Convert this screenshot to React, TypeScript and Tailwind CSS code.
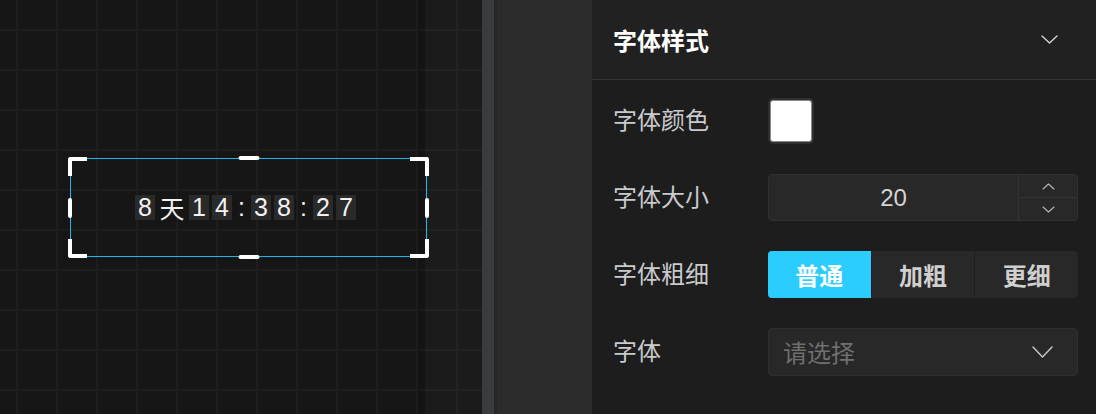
import { useState } from 'react';

const CJK = "font-['Noto_Sans_CJK_SC','Noto_Sans',sans-serif]";
const NUM = "font-['Liberation_Sans','Noto_Sans_CJK_SC',sans-serif]";

const countdown = ['8', '天', '1', '4', ':', '3', '8', ':', '2', '7'];

function Chevron({ up = false, w = 17, h = 9, color = '#d9d9d9', stroke = 1.3 }: { up?: boolean; w?: number; h?: number; color?: string; stroke?: number }) {
  const pts = up ? `1,${h - 1} ${w / 2},1 ${w - 1},${h - 1}` : `1,1 ${w / 2},${h - 1} ${w - 1},1`;
  return (
    <svg width={w} height={h} viewBox={`0 0 ${w} ${h}`} fill="none">
      <polyline points={pts} stroke={color} strokeWidth={stroke} strokeLinecap="round" strokeLinejoin="round" />
    </svg>
  );
}

function CountdownWidget() {
  return (
    <div className="absolute left-[70px] top-[158px] w-[357px] h-[99px] border border-[#1eb6ec] flex items-center justify-center">
      {/* corner handles */}
      <div className="absolute -left-[3px] -top-[2px] w-[19px] h-[19px] border-l-[4px] border-t-[4px] border-white rounded-tl-[3px]" />
      <div className="absolute -right-[3px] -top-[2px] w-[19px] h-[19px] border-r-[4px] border-t-[4px] border-white rounded-tr-[3px]" />
      <div className="absolute -left-[3px] -bottom-[2px] w-[19px] h-[19px] border-l-[4px] border-b-[4px] border-white rounded-bl-[3px]" />
      <div className="absolute -right-[3px] -bottom-[2px] w-[19px] h-[19px] border-r-[4px] border-b-[4px] border-white rounded-br-[3px]" />
      {/* edge handles */}
      <div className="absolute left-1/2 -translate-x-1/2 -top-[3px] w-[21px] h-[4px] rounded-full bg-white" />
      <div className="absolute left-1/2 -translate-x-1/2 -bottom-[3px] w-[21px] h-[4px] rounded-full bg-white" />
      <div className="absolute top-1/2 -translate-y-1/2 -left-[3px] w-[4px] h-[20px] rounded-full bg-white" />
      <div className="absolute top-1/2 -translate-y-1/2 -right-[3px] w-[4px] h-[20px] rounded-full bg-white" />

      <div className={`flex items-center gap-[3px] -ml-[6px] text-[25px] text-[#f2f2f2] ${NUM}`}>
        {countdown.map((c, i) =>
          c === ':' ? (
            <span key={i} className="w-[13px] h-[25px] flex items-center justify-center leading-none">:</span>
          ) : c === '天' ? (
            <span key={i} className={`w-[28px] h-[25px] flex items-center justify-center leading-none ${CJK}`}>天</span>
          ) : (
            <span key={i} className="w-[20px] h-[25px] bg-[#2a2a2a] flex items-center justify-center leading-none">{c}</span>
          ),
        )}
      </div>
    </div>
  );
}

function Canvas() {
  return (
    <div className="relative w-[482px] h-full bg-[#161616] bg-[linear-gradient(90deg,#1d1d1d_2px,transparent_2px),linear-gradient(#1d1d1d_2px,transparent_2px)] bg-[length:40px_40px] bg-[position:16px_29px] flex">
      <div className="flex-1" />
      <div className="w-[8px] bg-black/[0.08]" />
      <div className="w-[57px] bg-white/[0.025]" />
      <CountdownWidget />
    </div>
  );
}

function Row({ label, children }: { label: string; children: React.ReactNode }) {
  return (
    <div className="flex items-center h-[47px]">
      <div className="w-[155px] text-[24px] leading-none text-[#c9cacd] -mt-[3px]">{label}</div>
      {children}
    </div>
  );
}

function StylePanel() {
  const [weight, setWeight] = useState('普通');
  return (
    <div className={`flex-1 h-full bg-[#1d1d1d] flex flex-col ${CJK}`}>
      <div className="h-[80px] bg-[#212121] border-b border-[#353535] flex items-center justify-between pl-[21px] pr-[38px]">
        <span className="text-[24px] font-bold text-white leading-none">字体样式</span>
        <Chevron />
      </div>
      <div className="flex flex-col gap-[30px] pt-[17px] pl-[21px] pr-[18px]">
        <Row label="字体颜色">
          <div className="w-[46px] h-[46px] rounded-[5px] bg-[#2f2f2f] p-[2px]">
            <div className="w-full h-full rounded-[3px] border border-[#8a8a8a] bg-white" />
          </div>
        </Row>
        <Row label="字体大小">
          <div className="w-[310px] h-[47px] rounded-[4px] bg-[#282828] border border-[#303030] flex">
            <div className={`flex-1 flex items-center justify-center text-[24px] text-[#d4d4d4] ${NUM}`}>20</div>
            <div className="w-[59px] border-l border-[#333] flex flex-col">
              <div className="flex-1 flex items-center justify-center border-b border-[#333]">
                <Chevron up w={13} h={7} color="#b8b8b8" stroke={1.1} />
              </div>
              <div className="flex-1 flex items-center justify-center">
                <Chevron w={13} h={7} color="#b8b8b8" stroke={1.1} />
              </div>
            </div>
          </div>
        </Row>
        <Row label="字体粗细">
          <div className="w-[310px] h-[47px] rounded-[4px] bg-[#282828] flex overflow-hidden">
            {['普通', '加粗', '更细'].map((w, i) => (
              <button
                key={w}
                onClick={() => setWeight(w)}
                className={`flex-1 flex items-center justify-center text-[24px] font-bold leading-none ${
                  i > 0 ? 'border-l border-[#1f1f1f]' : ''
                } ${weight === w ? 'bg-[#2bcdfe] text-white' : 'text-[#cfcfcf]'}`}
              >
                {w}
              </button>
            ))}
          </div>
        </Row>
        <Row label="字体">
          <div className="w-[310px] h-[48px] rounded-[4px] bg-[#282828] border border-[#2f2f2f] flex items-center justify-between pl-[14px] pr-[24px]">
            <span className="text-[24px] leading-none text-[#6f6f6f]">请选择</span>
            <Chevron w={21} h={12} color="#c4c4c4" stroke={1.5} />
          </div>
        </Row>
      </div>
    </div>
  );
}

export default function App() {
  return (
    <div className="w-[1096px] h-[414px] flex overflow-hidden bg-[#2c2c2c]">
      <Canvas />
      <div className="w-[12px] h-full bg-[#3a3b3d]" />
      <div className="w-[3px] h-full bg-[#262626]" />
      <div className="w-[95px] h-full bg-[#2c2c2c]" />
      <StylePanel />
    </div>
  );
}
